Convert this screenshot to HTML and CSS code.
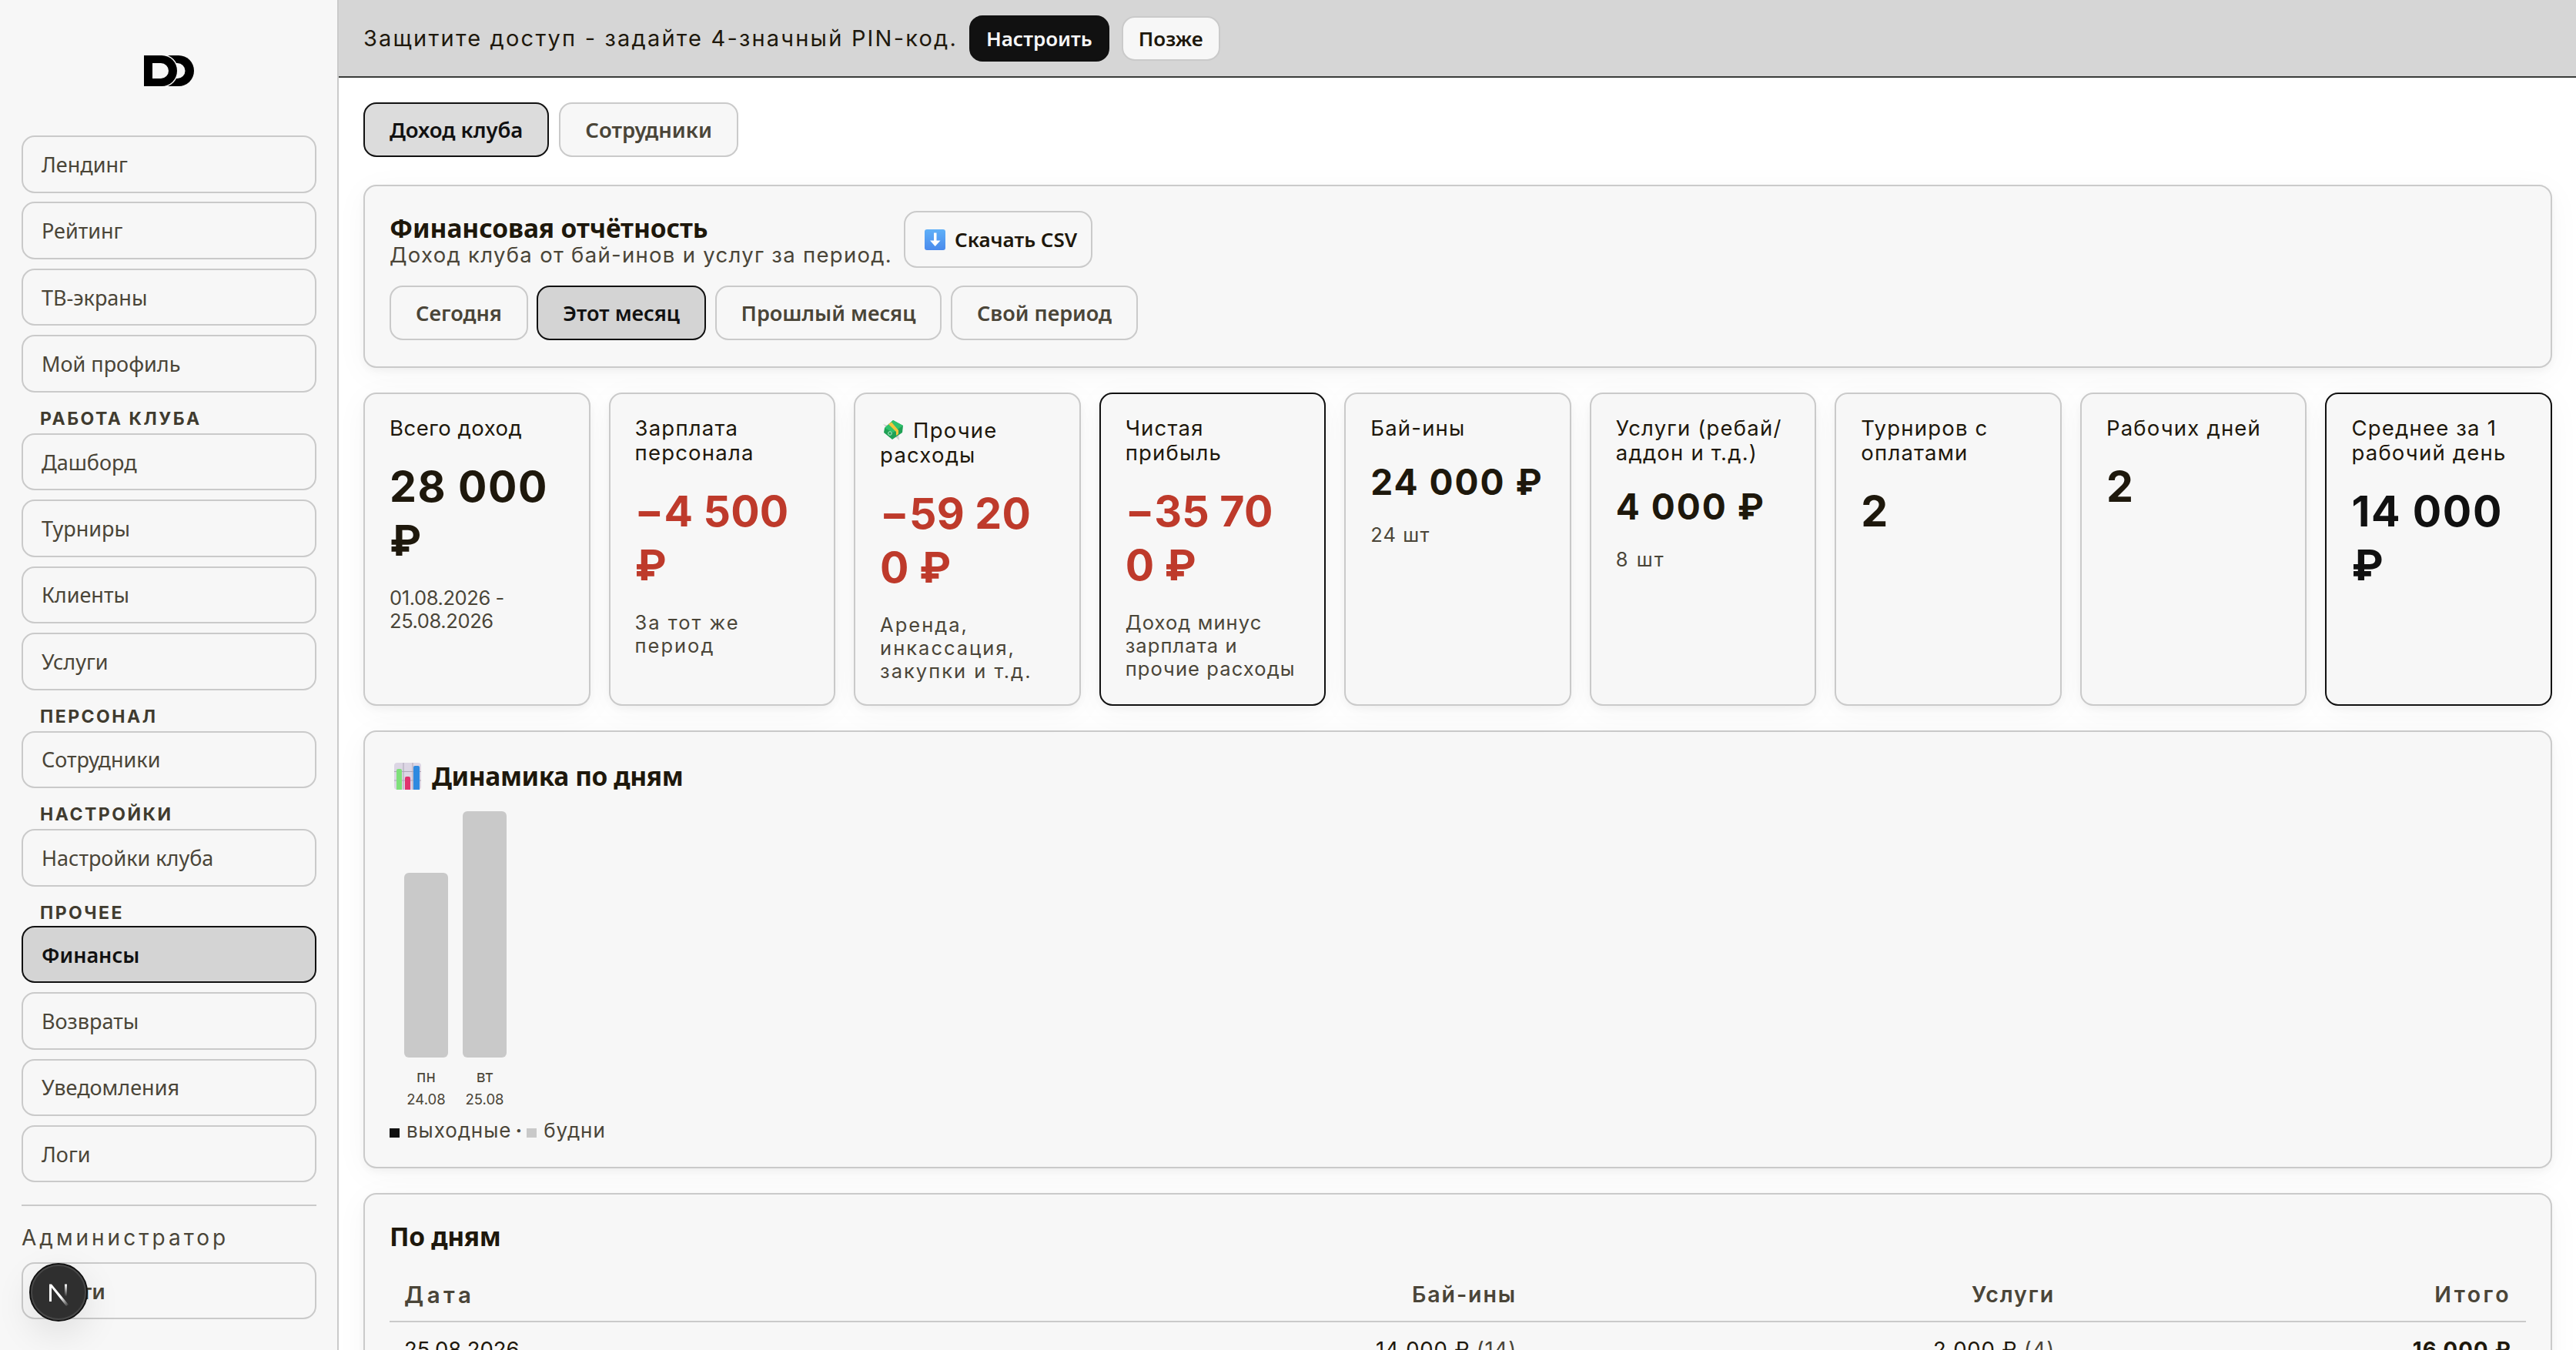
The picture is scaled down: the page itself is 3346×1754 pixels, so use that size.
FILE: index.html
```
<!DOCTYPE html>
<html lang="ru">
<head>
    <meta charset="UTF-8">
    <meta name="viewport" content="width=device-width, initial-scale=1.0">
    <title>Финансы</title>
    <link rel="stylesheet" href="styles.css">
</head>
<body>
<div class="app">
    <aside class="sidebar">
        <div class="logo">
            <svg width="65" height="40" viewBox="0 0 65 40">
                <path d="M27 0H45A20 20 0 0 1 45 40H27Z" fill="#000"/>
                <path d="M36 10H43.500A10 10 0 0 1 43.500 30H36Z" fill="#f7f7f7"/>
                <path d="M0 0H23A20 20 0 0 1 23 40H0Z" fill="#000" stroke="#f7f7f7" stroke-width="3" paint-order="stroke"/>
                <path d="M11 10H22A10 10 0 0 1 22 30H11Z" fill="#f7f7f7"/>
            </svg>
        </div>
        <nav class="nav">
            <a class="nav-item">Лендинг</a>
            <a class="nav-item">Рейтинг</a>
            <a class="nav-item">ТВ-экраны</a>
            <a class="nav-item">Мой профиль</a>
            <div class="nav-title">РАБОТА КЛУБА</div>
            <a class="nav-item">Дашборд</a>
            <a class="nav-item">Турниры</a>
            <a class="nav-item">Клиенты</a>
            <a class="nav-item">Услуги</a>
            <div class="nav-title">ПЕРСОНАЛ</div>
            <a class="nav-item">Сотрудники</a>
            <div class="nav-title">НАСТРОЙКИ</div>
            <a class="nav-item">Настройки клуба</a>
            <div class="nav-title nav-title-last">ПРОЧЕЕ</div>
            <a class="nav-item active">Финансы</a>
            <a class="nav-item">Возвраты</a>
            <a class="nav-item">Уведомления</a>
            <a class="nav-item">Логи</a>
        </nav>
        <div class="user">
            <div class="user-name">Администратор</div>
            <button class="logout">Войти</button>
        </div>
    </aside>

    <div class="page">
        <div class="pin-bar">
            <span class="pin-text">Защитите доступ - задайте 4-значный PIN-код.</span>
            <button class="btn-small btn-dark">Настроить</button>
            <button class="btn-small btn-light">Позже</button>
        </div>

        <main class="main">
            <div class="tabs">
                <button class="tab tab-current">Доход клуба</button>
                <button class="tab">Сотрудники</button>
            </div>

            <section class="panel report">
                <div class="report-head">
                    <div class="report-title">
                        <h2>Финансовая отчётность</h2>
                        <p>Доход клуба от бай-инов и услуг за период.</p>
                    </div>
                    <button class="btn-csv">
                        <svg class="csv-icon" width="27" height="27" viewBox="0 0 27 27">
                            <defs>
                                <linearGradient id="blue" x1="0" y1="0" x2="0" y2="1">
                                    <stop offset="0" stop-color="#5fb0f8"/>
                                    <stop offset="1" stop-color="#4a8aec"/>
                                </linearGradient>
                            </defs>
                            <rect width="27" height="27" rx="3" fill="url(#blue)"/>
                            <path d="M12 4.500H15.500V14.500H20.500L13.700 22L7 14.500H12Z" fill="#fff"/>
                        </svg>
                        Скачать CSV
                    </button>
                </div>
                <div class="tabs periods">
                    <button class="tab">Сегодня</button>
                    <button class="tab active">Этот месяц</button>
                    <button class="tab">Прошлый месяц</button>
                    <button class="tab">Свой период</button>
                </div>
            </section>

            <section class="stats">
                <div class="stat">
                    <div class="label label-tight">Всего доход</div>
                    <div class="value">28 000<br>₽</div>
                    <div class="note note-dates">01.08.2026 -<br>25.08.2026</div>
                </div>
                <div class="stat">
                    <div class="label">Зарплата<br>персонала</div>
                    <div class="value red">−4 500<br>₽</div>
                    <div class="note note-wide">За тот же<br>период</div>
                </div>
                <div class="stat stat-emoji">
                    <div class="label">
                        <svg class="money" width="28" height="28" viewBox="0 0 28 28">
                            <path d="M1 6L12 9L9 15ZM14 20L21 17L22 27Z" fill="#d2d2d2"/>
                            <path d="M14 1L27 8L26 17L13 26L2 17L3 11Z" fill="#1fa155"/>
                            <path d="M14 1L27 8L14 17L3 11Z" fill="#2fc26c"/>
                            <path d="M8 6L12 3.500L21 14V19L18 21V16Z" fill="#f3c53c"/>
                            <circle cx="10" cy="18" r="2.300" fill="none" stroke="#b9efcf"/>
                        </svg>Прочие<br>расходы</div>
                    <div class="value red">−59 20<br>0 ₽</div>
                    <div class="note note-wide">Аренда,<br>инкассация,<br>закупки и т.д.</div>
                </div>
                <div class="stat outlined">
                    <div class="label">Чистая<br>прибыль</div>
                    <div class="value red">−35 70<br>0 ₽</div>
                    <div class="note">Доход минус<br>зарплата и<br>прочие расходы</div>
                </div>
                <div class="stat">
                    <div class="label">Бай-ины</div>
                    <div class="value value-small">24 000 ₽</div>
                    <div class="note">24 шт</div>
                </div>
                <div class="stat">
                    <div class="label">Услуги (ребай/<br>аддон и т.д.)</div>
                    <div class="value value-small">4 000 ₽</div>
                    <div class="note note-wide">8 шт</div>
                </div>
                <div class="stat">
                    <div class="label">Турниров с<br>оплатами</div>
                    <div class="value">2</div>
                </div>
                <div class="stat">
                    <div class="label">Рабочих дней</div>
                    <div class="value">2</div>
                </div>
                <div class="stat outlined">
                    <div class="label">Среднее за 1<br>рабочий день</div>
                    <div class="value black">14 000<br>₽</div>
                </div>
            </section>

            <section class="panel chart">
                <h2>
                    <svg class="chart-icon" width="35" height="35" viewBox="0 0 35 35">
                        <rect width="35" height="35" rx="4" fill="#dcd6e4"/>
                        <path d="M0 11.500H35M0 23H35M12 0V35M24 0V35" stroke="#aca6b8" stroke-width="1"/>
                        <path d="M3 10a2 2 0 0 1 2-2h3a2 2 0 0 1 2 2V35H3Z" fill="#7fe07b"/>
                        <path d="M14 20a2 2 0 0 1 2-2h3a2 2 0 0 1 2 2V35H14Z" fill="#e0336e"/>
                        <path d="M25 6a2 2 0 0 1 2-2h4a2 2 0 0 1 2 2V35H25Z" fill="#2e8ae0"/>
                    </svg>
                    Динамика по дням
                </h2>
                <div class="bars">
                    <div class="bar-col">
                        <div class="bar" style="height: 240px"></div>
                        <div class="day">пн</div>
                        <div class="date">24.08</div>
                    </div>
                    <div class="bar-col">
                        <div class="bar" style="height: 320px"></div>
                        <div class="day">вт</div>
                        <div class="date">25.08</div>
                    </div>
                </div>
                <div class="legend">
                    <i class="square square-dark"></i><span>выходные</span><b>·</b><i class="square"></i><span>будни</span>
                </div>
            </section>

            <section class="panel days">
                <h2>По дням</h2>
                <table>
                    <thead>
                        <tr>
                            <th>Дата</th>
                            <th>Бай-ины</th>
                            <th>Услуги</th>
                            <th>Итого</th>
                        </tr>
                    </thead>
                    <tbody>
                        <tr>
                            <td>25.08.2026</td>
                            <td>14 000 ₽ <small>(14)</small></td>
                            <td>2 000 ₽ <small>(4)</small></td>
                            <td><strong>16 000 ₽</strong></td>
                        </tr>
                    </tbody>
                </table>
            </section>
        </main>
    </div>

    <div class="dev-badge">
        <svg width="76" height="76" viewBox="0 0 76 76">
            <defs>
                <linearGradient id="fade1" x1="0" y1="0" x2="1" y2="1">
                    <stop offset=".6" stop-color="#fff"/>
                    <stop offset="1" stop-color="#fff" stop-opacity="0"/>
                </linearGradient>
                <linearGradient id="fade2" x1="0" y1="0" x2="0" y2="1">
                    <stop offset="0" stop-color="#fff"/>
                    <stop offset="1" stop-color="#fff" stop-opacity="0"/>
                </linearGradient>
            </defs>
            <circle cx="38" cy="38" r="37" fill="#2f2f2f" stroke="#111" stroke-width="2"/>
            <circle cx="38" cy="38" r="35" fill="none" stroke="#474747" stroke-width="2"/>
            <path d="M26 50V27.500H29L51 54L48 56L29 32V50Z" fill="url(#fade1)"/>
            <rect x="46" y="27.500" width="3" height="16" fill="url(#fade2)"/>
        </svg>
    </div>
</div>
</body>
</html>
```
FILE: styles.css
```
*{
    box-sizing: border-box;
    margin: 0;
    padding: 0;
}
body{
    background-color: #fff;
    color: #1e180c;
    font-family: Inter, "DejaVu Sans", sans-serif;
    font-size: 27.5px;
    height: 1754px;
    overflow: hidden;
}
button{
    font-family: "Noto Sans", sans-serif;
    font-size: 27px;
    font-weight: 600;
    border: 2px solid #cacaca;
    border-radius: 17px;
    background-color: #f7f7f7;
    color: #1e180c;
    white-space: nowrap;
}
h2{
    font-family: "Noto Sans", sans-serif;
    font-size: 33.5px;
    font-weight: 700;
    line-height: 40px;
    letter-spacing: -0.1px;
}
.app{
    display: flex;
    height: 1754px;
    overflow: hidden;
}

/* sidebar */
.sidebar{
    width: 440px;
    flex: none;
    padding: 72px 27px 0 28px;
    background-color: #f7f7f7;
    border-right: 2px solid #cacaca;
}
.logo{
    height: 104px;
    display: flex;
    justify-content: center;
    align-items: flex-start;
}
.nav-item{
    display: flex;
    align-items: center;
    height: 74.6px;
    padding: 0 24px;
    border: 2px solid #cacaca;
    border-radius: 17px;
    font-family: "Noto Sans", sans-serif;
    font-size: 27px;
    color: #4a4538;
}
.nav-item + .nav-item{
    margin-top: 11.8px;
}
.nav-title{
    margin-top: 20px;
    margin-bottom: 5px;
    padding-left: 24px;
    font-size: 23px;
    font-weight: 700;
    line-height: 28px;
    letter-spacing: 2.5px;
    color: #403b2f;
}
.nav-title-last{
    margin-bottom: 3px;
}
.active{
    background-color: #d4d4d4;
    border-color: #111;
    color: #111;
    font-weight: 600;
}
.user{
    margin-top: 29px;
    padding-top: 24px;
    border-top: 2px solid #cacaca;
}
.user-name{
    line-height: 34px;
    font-size: 28px;
    letter-spacing: 4px;
    color: #4a4538;
}
.logout{
    display: block;
    width: 100%;
    height: 74px;
    margin-top: 15px;
    padding-left: 24px;
    text-align: left;
    color: #4a4538;
}

/* top bar */
.page{
    flex: 1;
    min-width: 0;
}
.pin-bar{
    display: flex;
    align-items: center;
    height: 101px;
    padding-left: 32px;
    background-color: #d6d6d6;
    border-bottom: 2px solid #3a3c3a;
}
.pin-text{
    width: 767px;
    font-size: 29px;
    letter-spacing: 2.2px;
    white-space: nowrap;
    margin-right: 20px;
}
.btn-small{
    height: 58px;
    padding: 0 20px;
    font-size: 26px;
}
.btn-dark{
    height: 60px;
    background-color: #111;
    border-color: #111;
    color: #f7f7f7;
    margin-right: 16px;
}

/* content */
.main{
    padding: 32px 31px 32px 32px;
}
.tabs{
    display: flex;
    gap: 13px;
}
.tab{
    height: 71px;
    padding: 0 32px;
    font-size: 27.5px;
    color: #4a4538;
}
.tab-current{
    background-color: #dcdcdc;
    border-color: #111;
    color: #111;
}
.periods .tab{
    font-size: 27.1px;
}
.tab.active{
    color: #111;
}
.panel, .stat{
    background-color: #f7f7f7;
    border: 2px solid #cacaca;
    border-radius: 17px;
    box-shadow: 0 4px 10px rgba(0,0,0,0.04), 0 8px 44px rgba(0,0,0,0.04);
}
.panel{
    padding: 32px;
}
.report{
    height: 238px;
    margin-top: 36px;
}
.report-head{
    display: flex;
    height: 74px;
}
.report-title{
    width: 652px;
    margin-right: 16px;
    padding-top: 2px;
    white-space: nowrap;
}
.report-title p{
    line-height: 32px;
    margin-top: -1px;
    letter-spacing: 1.3px;
    color: #4a4538;
}
.btn-csv{
    display: flex;
    align-items: center;
    height: 74px;
    padding: 0 18px 0 25px;
    font-size: 26px;
}
.csv-icon{
    margin-right: 12px;
}
.periods{
    margin-top: 23px;
    gap: 11.5px;
}

.stats{
    display: grid;
    grid-template-columns: repeat(9, minmax(0, 1fr));
    gap: 24px;
    margin-top: 32px;
}
.stat{
    height: 407px;
    padding: 28px 32px 0;
    white-space: nowrap;
}
.stat-emoji{
    padding-top: 31px;
}
.outlined{
    border-color: #111;
}
.label{
    line-height: 32px;
    letter-spacing: 1.2px;
}
.label-tight{
    letter-spacing: 0.5px;
}
.money{
    display: inline-block;
    vertical-align: -4px;
    margin: -6px 12px 0 3px;
}
.value{
    margin-top: 25px;
    font-size: 55.5px;
    font-weight: 700;
    line-height: 70px;
    letter-spacing: 1.6px;
}
.value-small{
    font-size: 46px;
    line-height: 58px;
    letter-spacing: 2px;
}
.red{
    letter-spacing: 0.2px;
    color: #be3a2b;
}
.black{
    color: #111;
}
.note{
    margin-top: 25px;
    font-size: 25.5px;
    line-height: 30px;
    letter-spacing: 1.1px;
    color: #4a4538;
}
.note-wide{
    letter-spacing: 2px;
}
.note-dates{
    letter-spacing: -0.4px;
}

/* chart */
.chart{
    height: 569px;
    margin-top: 32px;
}
.chart h2{
    display: flex;
    align-items: center;
    margin-top: 5px;
    letter-spacing: -0.4px;
}
.chart-icon{
    margin: 0 14px 0 6px;
}
.bars{
    display: flex;
    align-items: flex-end;
    gap: 19px;
    height: 390px;
    margin-top: 26px;
    padding: 0 19px;
}
.bar-col{
    width: 57px;
    text-align: center;
    color: #4a4538;
}
.bar{
    background-color: #c9c9c9;
    border-radius: 6px;
}
.day{
    margin-top: 12px;
    font-size: 21px;
    line-height: 26px;
}
.date{
    font-size: 18.5px;
    line-height: 32px;
}
.legend{
    display: flex;
    align-items: center;
    margin-top: 8px;
    line-height: 34px;
    color: #4a4538;
    font-size: 26px;
    letter-spacing: 0.9px;
}
.legend b{
    width: 20px;
    text-align: center;
}
.square{
    width: 13px;
    height: 12px;
    margin: 6px 9px 0 0;
    background-color: #c9c9c9;
}
.square-dark{
    background-color: #111;
}

/* table */
.days{
    height: 500px;
    margin-top: 32px;
}
.days h2{
    margin-top: 2px;
    letter-spacing: -0.3px;
}
table{
    width: 100%;
    margin-top: 21px;
    border-collapse: collapse;
    table-layout: fixed;
}
th, td{
    height: 70px;
    padding: 0 19px;
    text-align: right;
    white-space: nowrap;
    letter-spacing: 0.8px;
}
th{
    border-bottom: 2px solid #cacaca;
    color: #4a4538;
    font-size: 28.5px;
    font-weight: 600;
    letter-spacing: 1.9px;
}
th:first-child, td:first-child{
    width: 742px;
    text-align: left;
}
th:first-child{
    font-size: 29.5px;
    letter-spacing: 4.5px;
}
td:first-child{
    letter-spacing: 0;
}
th:nth-child(2){
    width: 741px;
}
th:nth-child(3){
    width: 699px;
}
th:last-child{
    letter-spacing: 3.5px;
}
td:last-child{
    letter-spacing: 1.2px;
}
small{
    font-size: inherit;
    color: #4a4538;
}

.dev-badge{
    position: absolute;
    left: 38px;
    top: 1641px;
    width: 76px;
    height: 76px;
    border-radius: 50%;
    box-shadow: 0 16px 48px rgba(0,0,0,0.1);
}
```
